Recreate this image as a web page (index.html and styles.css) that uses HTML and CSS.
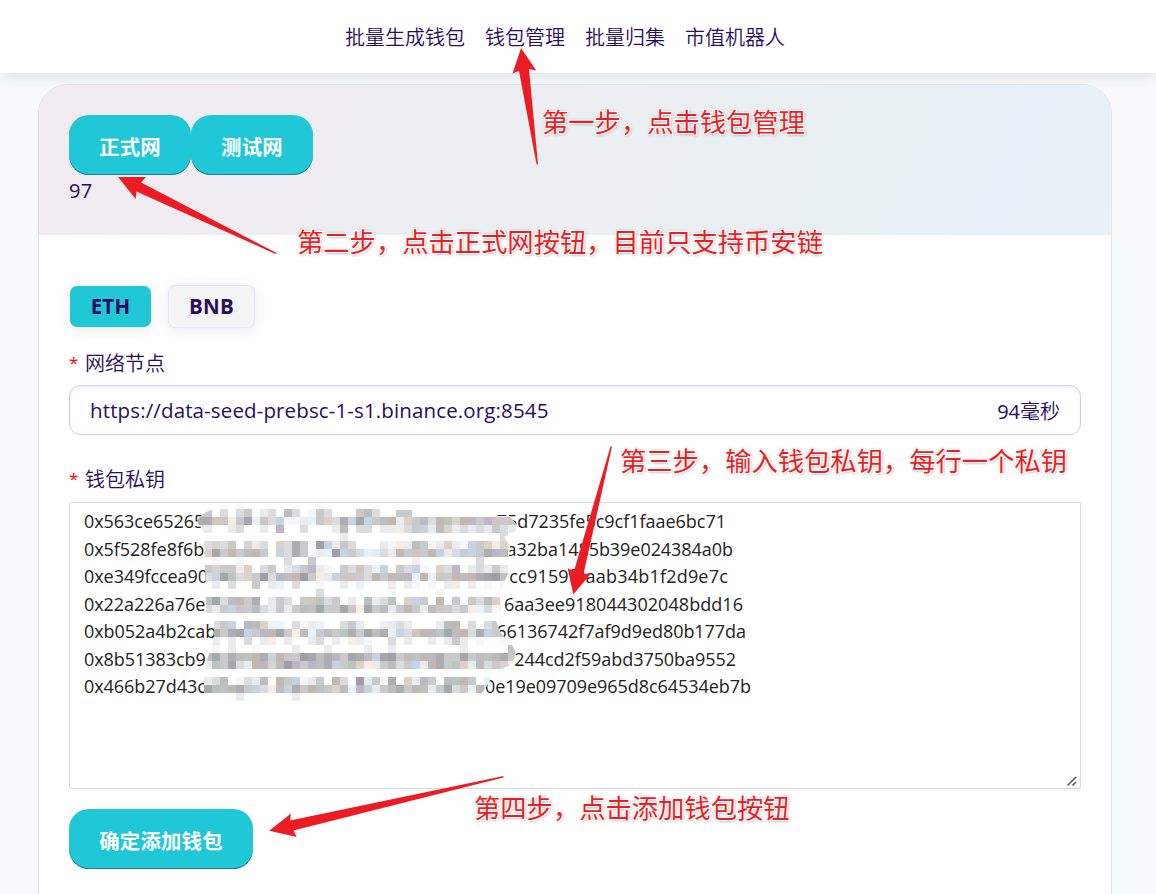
FILE: index.html
```html
<!DOCTYPE html>
<html lang="zh-CN">
<head>
<meta charset="utf-8">
<title>钱包管理</title>
<link rel="stylesheet" href="styles.css">
</head>
<body>
<header class="topbar">
  <nav class="nav">
    <a>批量生成钱包</a><a>钱包管理</a><a>批量归集</a><a>市值机器人</a>
  </nav>
</header>
<main class="card">
  <section class="card-head">
    <div class="networks"><button class="btn">正式网</button><button class="btn">测试网</button></div>
    <div class="chain-id">97</div>
  </section>
  <section class="card-body">
    <div class="tabs"><button class="tab active">ETH</button><button class="tab">BNB</button></div>
    <div class="label"><i>*</i>网络节点</div>
    <div class="field"><span class="url">https://data-seed-prebsc-1-s1.binance.org:8545</span><span class="delay">94<span class="unit">毫秒</span></span></div>
    <div class="label second"><i>*</i>钱包私钥</div>
    <div class="keys">
      <div class="key k1"><span>0x563ce65265</span><span>35e&nbsp;75d7235fe5c9cf1faae6bc71</span></div>
      <div class="key k2"><span>0x5f528fe8f6ba</span><span>a32ba1485b39e024384a0b</span></div>
      <div class="key k3"><span>0xe349fccea90</span><span>cc9159f8aab34b1f2d9e7c</span></div>
      <div class="key k4"><span>0x22a226a76e</span><span>16aa3ee918044302048bdd16</span></div>
      <div class="key k5"><span>0xb052a4b2cab</span><span>66136742f7af9d9ed80b177da</span></div>
      <div class="key k6"><span>0x8b51383cb9</span><span>7244cd2f59abd3750ba9552</span></div>
      <div class="key k7"><span>0x466b27d43c</span><span>0e19e09709e965d8c64534eb7b</span></div>
      <svg class="grip" width="12" height="12" viewBox="0 0 12 12"><path d="M1.5 10.5 10 2M6.5 10.5 10 7"/></svg>
    </div>
    <button class="btn submit">确定添加钱包</button>
  </section>
</main>
<svg class="overlay" width="1156" height="894" viewBox="0 0 1156 894">
  <defs><clipPath id="brush"><path d="M197 521Q202 512 214 509H228V503H365L384 510H420V514H475V516H510L516 524V531L504 537L510 546L508 574L503 584V596L500 612L496 621L500 632L512 645Q518 653 513 663L502 669H494L489 683L482 693H364V701H236L229 700H204V677L207 660L212 645L214 637V621H206V600L204 533Z"/></clipPath></defs>
  <g id="mosaic" clip-path="url(#brush)"></g>
  <g class="arrows">
    <path d="M521 48 536.3 70.6 529 69 538 164.5H536.6L519 71 512.5 73.5Z"/>
    <path d="M118 177 146 177 141 182.5 276.2 252.7 275.5 254 136.5 191.5 135.7 199Z"/>
    <path d="M573.3 594.5 567.7 568.3 574 571 610.6 446.2 612 446.5 583.5 574 590.8 573.7Z"/>
    <path d="M269.2 830.7 291 813.5 290 820.5 503.5 776V777.6L293.5 830.5 296.7 837Z"/>
  </g>
</svg>
<div class="note n1">第一步，点击钱包管理</div>
<div class="note n2">第二步，点击正式网按钮，目前只支持币安链</div>
<div class="note n3">第三步，输入钱包私钥，每行一个私钥</div>
<div class="note n4">第四步，点击添加钱包按钮</div>
<script src="mosaic.js"></script>
</body>
</html>
```
FILE: styles.css
```css
* { box-sizing: border-box; }
body {
  margin: 0;
  height: 894px;
  overflow: hidden;
  position: relative;
  background: #f9fafc;
  color: #280d5f;
  font-family: "Open Sans", "Noto Sans CJK SC", sans-serif;
  font-size: 20px;
}
button { font-family: inherit; color: inherit; }
.topbar {
  height: 73px;
  background: #fff;
  box-shadow: 0 4px 14px rgba(0, 0, 0, .1);
  padding: 22px 0 0 345px;
}
.nav { display: flex; gap: 20px; line-height: 30px; font-weight: 350; font-family: "Noto Sans CJK SC", sans-serif; white-space: nowrap; }
.card {
  position: relative;
  margin: 11px 44px 0 38px;
  height: 850px;
  background: #fff;
  border: 1px solid #e2e0e8;
  border-radius: 30px 30px 0 0;
  overflow: hidden;
}
.card-head {
  height: 150px;
  padding: 30px;
  background: linear-gradient(112deg, #f2ebf1 0%, #e8f0f3 78%, #e7eff8 88%, #e7f1f6 100%);
}
.networks { display: flex; }
.btn {
  display: block;
  height: 60px;
  width: 122px;
  padding: 1px 0 0;
  border: 0;
  border-radius: 20px;
  background: #20c7d6;
  box-shadow: inset 0 -1px 0 #177f8f;
  color: #fff;
  font-size: 20.4px;
  font-weight: 700;
  letter-spacing: .2px;
}
.submit { width: 184px; margin-top: 20px; }
.chain-id { line-height: 30px; padding-top: 1px; letter-spacing: .2px; }
.card-body { padding: 49px 30px 0; }
.tabs { display: flex; gap: 17px; align-items: center; height: 44px; padding-left: 1px; }
.tab {
  width: 81px;
  height: 41px;
  border: 0;
  border-radius: 7px;
  background: #f4f4f5;
  font-size: 20.5px;
  font-weight: 700;
  letter-spacing: .2px;
  padding: 0;
  box-shadow: 0 2px 14px rgba(0, 0, 0, .09);
}
.tab + .tab { width: 87px; height: 43px; border: 1px solid #e7e3f5; }
.tab.active { background: #20c7d6; }
.label { height: 30px; margin-top: 20px; line-height: 30px; display: flex; font-weight: 350; font-family: "Noto Sans CJK SC", sans-serif; }
.label i { width: 16px; color: #f00; font: 400 17px/30px "Open Sans", sans-serif; }
.label.second { margin-top: 29px; }
.field {
  height: 50px;
  margin-top: 7px;
  padding: 0 20px;
  border: 1px solid #d7caec;
  border-radius: 11px;
  box-shadow: inset 0 2px 3px rgba(40, 13, 95, .06);
  display: flex;
  align-items: center;
  justify-content: space-between;
}
.url { font-size: 20.5px; letter-spacing: .13px; }
.unit { font-weight: 350; }
.keys {
  position: relative;
  height: 287px;
  margin-top: 8px;
  padding: 5px 14px;
  border: 1px solid #d9d9d9;
  border-radius: 2px;
  color: #222;
  font-size: 18px;
}
.key { display: flex; justify-content: space-between; line-height: 27.5px; height: 27.5px; white-space: nowrap; letter-spacing: -.05px; }
.k1 { width: 642px; }
.k2 { width: 649px; }
.k3 { width: 644px; }
.k4 { width: 659px; }
.k5 { width: 662px; }
.k6 { width: 652px; }
.k7 { width: 667px; }
.k1 span + span { letter-spacing: -.02px; word-spacing: 11px; }
.k3 span + span { letter-spacing: .2px; }
.k4 span + span { letter-spacing: .05px; }
.grip { position: absolute; right: 2px; bottom: 1px; fill: none; stroke: #555; stroke-width: 1.5; }
.overlay { position: absolute; left: 0; top: 0; }
.arrows { fill: #ed1c24; }
.note {
  position: absolute;
  color: #ed1c24;
  font: 400 26.3px/36px "Noto Sans CJK SC", sans-serif;
  white-space: nowrap;
  text-shadow: 1px 1px 0 #fff, -1px -1px 0 #fff, 1px -1px 0 #fff, -1px 1px 0 #fff, 0 0 3px #999, 1px 1px 3px #aaa;
}
.n1 { left: 542px; top: 103px; }
.n2 { left: 297px; top: 223px; }
.n3 { left: 620px; top: 442px; }
.n4 { left: 474px; top: 789px; }
```
FILE: mosaic.js
```js
// Pixelated cover over the middle of each private key.
const palette = {
  '.': '#ffffff', a: '#f7f7f8', b: '#e9ebec', c: '#dadcdf', d: '#c9cacb', e: '#bbbdbf',
  f: '#aeadb0', g: '#a3a9aa', k: '#a19ea9', s: '#c6d3e2', l: '#e9f2fb', o: '#f8ede4',
  p: '#ddd2c9', r: '#cfc5c2', t: '#c2b8b1', u: '#bbb7c4', v: '#bcc4c0'
};
const rows = [
  '....a.........a........................',
  'd.c.cd.bc.ec.adc...dec..dd.............',
  'frrodglrcsaabldpcfsgsdetbpdectvptudurdr',
  'b..bc..b.u..c...be.cc.bbocdsbepbcbcbdcb',
  '.................b...................c.',
  'cpcd.pbc.pcfdaksbrc...baobedabpbasdpopo',
  'pgdtdetd.scfdablksdclbcbtdrdtsbcdsdfueo',
  '.a..a.....c..d............o.......c....',
  'dpddop.cd.bcduba.dcrcls.dcsa.pcu.bcbdba',
  'csgvcpdkcuetkdobsrrdctdteultlrdtetfgkvd',
  '.b.c..d.bl.c..a..b.l...b.ba.a.bo.b.a.ab',
  '..............c........a.....a.........',
  'vgcetdf.bdc.drvcd.b.ebcv.psd.t.d.dcepab',
  'cbdsrdecbdbdevgddgrogdebdtdberdcdolcabd',
  '.......................................',
  '.cds.uepll.cabl..cdb..lbcb...bet.c.cd..',
  'ffdfgsdutgdoeldedvfdgeflscrtuvgetcfsdrd',
  '.b.b.c.bo.b..bc.b.oba..c.b..b.bdb.a..a.',
  '.a.b..a....b...b....b..b........b.....v',
  'egdfevtfstrdkgefudgfesgkdevtufddgdevtfd',
  'bvdgcbtupekuduefsdvpobdecdsbtfdvpbecdpo',
  '.......................................',
  'bce.acbe.tdsabd.tc.kbdaf.pbud.evtd.ldbt',
  'gevtfdscoesfdtvdpelusbdefdtvbdgcdltsdea',
  '....b......b........a..................'
];
const ns = 'http://www.w3.org/2000/svg';
const layer = document.getElementById('mosaic');
const cell = (x, y, w, fill) => {
  const r = document.createElementNS(ns, 'rect');
  r.setAttribute('x', x);
  r.setAttribute('y', y);
  r.setAttribute('width', w);
  r.setAttribute('height', 8);
  r.setAttribute('fill', fill);
  layer.appendChild(r);
};
rows.forEach((row, j) => {
  const y = 501 + j * 8;
  [...row].forEach((c, i) => {
    const x = 204 + i * 8;
    cell(i ? x : x - 8, y, i ? 8 : 16, palette[c]);
  });
});
```
